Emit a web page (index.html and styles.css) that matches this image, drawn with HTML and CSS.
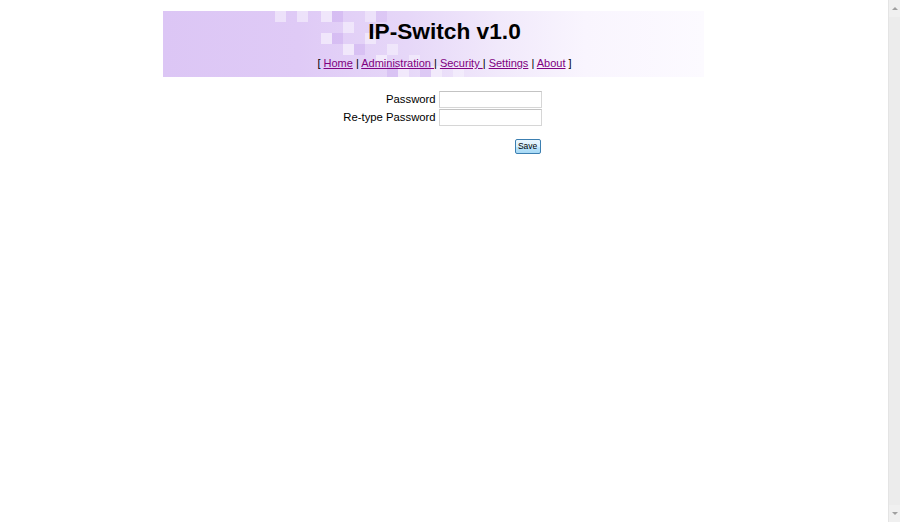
FILE: index.html
```html
<!DOCTYPE html>
<html>
<head>
<meta charset="utf-8">
<title>IP-Switch v1.0</title>
<link rel="stylesheet" href="styles.css">
</head>
<body>
<div class="page">
  <div class="header">
    <svg class="checker" width="541" height="66" viewBox="0 0 541 66">
      <g fill="#ffffff">
        <rect x="112" y="0" width="11" height="11" opacity="0.45"/>
        <rect x="134" y="0" width="11" height="11" opacity="0.45"/>
        <rect x="158" y="0" width="11" height="11" opacity="0.5"/>
        <rect x="180" y="11" width="11" height="11" opacity="0.45"/>
        <rect x="158" y="22" width="11" height="11" opacity="0.5"/>
        <rect x="180" y="33" width="11" height="11" opacity="0.5"/>
        <rect x="202" y="22" width="11" height="11" opacity="0.45"/>
        <rect x="213" y="44" width="11" height="11" opacity="0.5"/>
        <rect x="235" y="55" width="11" height="11" opacity="0.45"/>
        <rect x="224" y="33" width="11" height="11" opacity="0.4"/>
        <rect x="246" y="44" width="11" height="11" opacity="0.4"/>
        <rect x="268" y="55" width="11" height="11" opacity="0.4"/>
        <rect x="290" y="55" width="11" height="11" opacity="0.35"/>
        <rect x="202" y="0" width="11" height="11" opacity="0.35"/>
      </g>
      <g fill="#c9a8ee">
        <rect x="169" y="0" width="11" height="11" opacity="0.45"/>
        <rect x="169" y="22" width="11" height="11" opacity="0.45"/>
        <rect x="191" y="33" width="11" height="11" opacity="0.4"/>
        <rect x="224" y="55" width="11" height="11" opacity="0.4"/>
        <rect x="257" y="55" width="11" height="11" opacity="0.35"/>
        <rect x="213" y="0" width="11" height="11" opacity="0.3"/>
      </g>
    </svg>
    <h1 class="title">IP-Switch v1.0</h1>
    <div class="nav">[ <a href="#">Home</a> | <a href="#">Administration </a>| <a href="#">Security </a>| <a href="#">Settings</a> | <a href="#">About</a> ]</div>
  </div>
  <form class="form">
    <label class="label">Password</label>
    <input class="field" type="password">
    <label class="label">Re-type Password</label>
    <input class="field" type="password">
    <div class="actions"><button class="save" type="button">Save</button></div>
  </form>
</div>
<div class="scrollbar">
  <div class="arrow up"></div>
  <div class="track"></div>
  <div class="arrow down"></div>
</div>
</body>
</html>
```
FILE: styles.css
```css
html, body {
  margin: 0;
  padding: 0;
  background: #ffffff;
}
body {
  font-family: "Liberation Sans", Arial, sans-serif;
  color: #000;
}
.page {
  width: 889px;
  padding-top: 11px;
}
.header {
  position: relative;
  width: 563px;
  height: 66px;
  margin: 0 auto;
  background: linear-gradient(to right, #dcc6f5 0%, #dfcaf6 25%, #e6d7f8 45%, #f1e9fb 62%, #f9f5fe 78%, #fcfaff 100%);
  background-size: 541px 66px;
  background-repeat: no-repeat;
  text-align: center;
}
.checker {
  position: absolute;
  left: 0;
  top: 0;
}
.title {
  position: relative;
  margin: 0;
  padding-top: 7px;
  font-size: 22.7px;
  line-height: 26px;
  font-weight: bold;
}
.nav {
  position: relative;
  margin-top: 12px;
  font-size: 11px;
  line-height: 14px;
}
.nav a {
  color: #800080;
  text-decoration: underline;
}
.form {
  display: grid;
  grid-template-columns: auto 103px;
  column-gap: 3px;
  row-gap: 1px;
  justify-content: center;
  align-items: center;
  margin-top: 14px;
  padding-right: 4px;
}
.label {
  text-align: right;
  font-size: 11.3px;
  line-height: 17px;
}
.field {
  box-sizing: border-box;
  width: 103px;
  height: 17px;
  margin: 0;
  padding: 0 2px;
  border: 1px solid #d6d6d6;
  border-top-color: #c3c3c3;
  background: #fff;
}
.actions {
  grid-column: 2;
  display: flex;
  justify-content: flex-end;
  margin-top: 12px;
}
.save {
  box-sizing: border-box;
  width: 26px;
  height: 15px;
  padding: 0;
  margin: 0 1px 0 0;
  font-family: "Liberation Sans", Arial, sans-serif;
  font-size: 8.5px;
  line-height: 11px;
  color: #000;
  border: 1px solid #3c7fb1;
  border-radius: 2px;
  background: linear-gradient(to bottom, #eaf6fd 0%, #d9f0fc 50%, #bee6fd 51%, #a7d9f5 100%);
}
.scrollbar {
  position: fixed;
  top: 0;
  right: 0;
  width: 11px;
  height: 522px;
  display: flex;
  flex-direction: column;
  background: #f0f0f0;
  border-left: 1px solid #e4e4e4;
}
.arrow {
  height: 17px;
  position: relative;
}
.arrow.up::after, .arrow.down::after {
  content: "";
  position: absolute;
  left: 3px;
  width: 0;
  height: 0;
  border-left: 3px solid transparent;
  border-right: 3px solid transparent;
}
.arrow.up::after {
  top: 7px;
  border-bottom: 3px solid #a0a0a0;
}
.arrow.down::after {
  top: 7px;
  border-top: 3px solid #a0a0a0;
}
.track {
  flex: 1;
  background: #ececec;
}
```
